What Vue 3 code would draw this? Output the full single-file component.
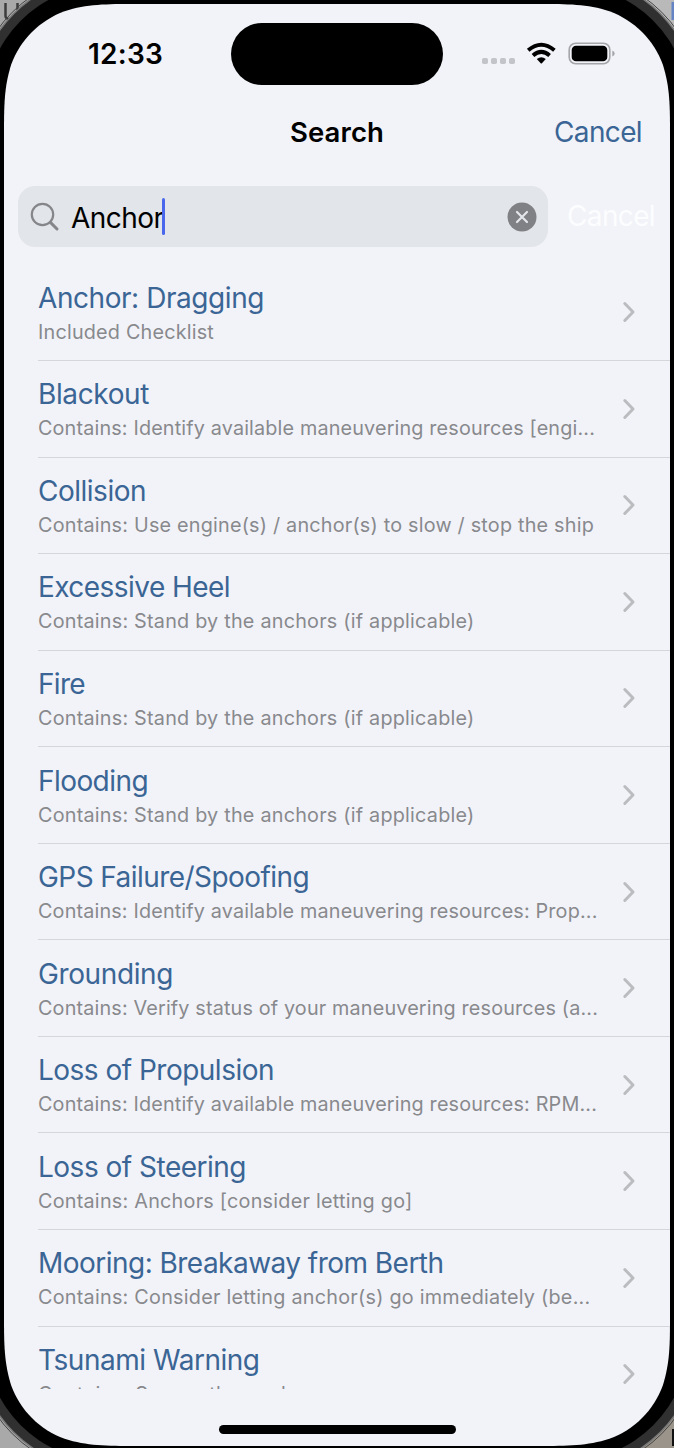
<script setup>
const rows = [
  { title: 'Anchor: Dragging', sub: 'Included Checklist', tw: 226, sw: 176 },
  { title: 'Blackout', sub: 'Contains: Identify available maneuvering resources [engi...', tw: 111, sw: 557 },
  { title: 'Collision', sub: 'Contains: Use engine(s) / anchor(s) to slow / stop the ship', tw: 108, sw: 556 },
  { title: 'Excessive Heel', sub: 'Contains: Stand by the anchors (if applicable)', tw: 192, sw: 436.5 },
  { title: 'Fire', sub: 'Contains: Stand by the anchors (if applicable)', tw: 47, sw: 436.5 },
  { title: 'Flooding', sub: 'Contains: Stand by the anchors (if applicable)', tw: 110, sw: 436.5 },
  { title: 'GPS Failure/Spoofing', sub: 'Contains: Identify available maneuvering resources: Prop...', tw: 271, sw: 559.5 },
  { title: 'Grounding', sub: 'Contains: Verify status of your maneuvering resources (a...', tw: 135, sw: 560 },
  { title: 'Loss of Propulsion', sub: 'Contains: Identify available maneuvering resources: RPM...', tw: 236, sw: 559 },
  { title: 'Loss of Steering', sub: 'Contains: Anchors [consider letting go]', tw: 208, sw: 374.5 },
  { title: 'Mooring: Breakaway from Berth', sub: 'Contains: Consider letting anchor(s) go immediately (be...', tw: 405.5, sw: 552.5 },
  { title: 'Tsunami Warning', sub: 'Contains: Secure the anchor', tw: 221.5, sw: 275 },
]

// Spread the leftover line width evenly between the letters.
const vFit = {
  mounted(el, { value }) {
    const w = el.getBoundingClientRect().width
    el.style.letterSpacing = `${(value - w) / el.textContent.length}px`
  },
}
</script>

<template>
  <div class="desktop">
    <svg class="device" width="674" height="1448" viewBox="0 0 674 1448">
      <rect width="674" height="1448" fill="#a9a9a9" />
      <path d="M5.5 3V16Q5.5 19 10 19" fill="none" stroke="#3c3c3c" stroke-width="2.5" />
      <path d="M17.5 3V10" stroke="#3c3c3c" stroke-width="2.5" />
      <rect x="634" width="40" height="60" fill="#b9b9b9" />
      <rect x="671.5" y="2" width="3" height="18" fill="#6484c4" />
      <rect x="634" y="1400" width="40" height="48" fill="#9b948a" />
      <path d="M673 1429V1446" stroke="#111" stroke-width="2" />
      <rect x="-25" y="-25" width="724" height="1496" rx="132" fill="#303030" stroke="#777" stroke-width="1.5" />
      <rect x="-27" y="-27" width="728" height="1500" rx="134" fill="none" stroke="#444" stroke-width="1" />
      <rect x="-15" y="-15" width="704" height="1476" rx="122" fill="#000" />
      <path
        fill="#f2f3f8"
        d="M136 4H538C568 4 587 4 609.4 11.2C634.2 20.2 653.8 39.8 662.8 64.6C670 87.4 670 106 670 136V1314C670 1344 670 1362.6 662.8 1385.4C653.8 1410.2 634.2 1429.8 609.4 1438.8C587 1446 568 1446 538 1446H136C106 1446 87 1446 64.6 1438.8C39.8 1429.8 20.2 1410.2 11.2 1385.4C4 1362.6 4 1344 4 1314V136C4 106 4 87.4 11.2 64.6C20.2 39.8 39.8 20.2 64.6 11.2C87 4 106 4 136 4Z"
      />
    </svg>

    <div class="screen">
      <header class="status">
        <span v-fit="75" class="time">12:33</span>
        <div class="island"></div>
        <svg class="indicators" width="136" height="26" viewBox="0 0 136 26">
          <g fill="#c3c4c9">
            <rect x="2" y="17" width="6" height="6" rx="1.7" />
            <rect x="11" y="17" width="6" height="6" rx="1.7" />
            <rect x="20" y="17" width="6" height="6" rx="1.7" />
            <rect x="29" y="17" width="6" height="6" rx="1.7" />
          </g>
          <g fill="none" stroke="#000" stroke-width="4">
            <path d="M48.2 9.3Q61.3 -1.7 74.4 9.3" />
            <path d="M53 14.4Q61.3 7.2 69.6 14.4" />
          </g>
          <path d="M56.8 18.1Q61.3 14.5 65.8 18.1L61.9 22.3Q61.3 22.9 60.7 22.3Z" />
          <rect x="89.2" y="2.2" width="40.6" height="20.6" rx="6.5" fill="none" stroke="#a4a5a8" stroke-width="1.6" />
          <rect x="91.7" y="4.8" width="35.6" height="15.4" rx="4.3" />
          <path d="M132.3 9.5Q134.7 10.5 134.7 12.500T132.3 15.5Z" fill="#a4a5a8" />
        </svg>
      </header>

      <nav class="navbar">
        <span v-fit="94" class="heading">Search</span>
        <span v-fit="88" class="cancel">Cancel</span>
      </nav>

      <div class="searchbar">
        <div class="field">
          <svg class="glass" width="30" height="30" viewBox="0 0 30 30" fill="none" stroke="#85868a">
            <circle cx="12.5" cy="12.5" r="10.7" stroke-width="2.2" />
            <path d="M20.4 20.4L27 27" stroke-width="3" stroke-linecap="round" />
          </svg>
          <span v-fit="92.5" class="query">Anchor</span>
          <span class="caret"></span>
          <svg class="clear" width="30" height="30" viewBox="0 0 30 30">
            <circle cx="15" cy="15" r="14.5" fill="#808185" />
            <path d="M10 10L20 20M20 10L10 20" stroke="#e3e6ea" stroke-width="2.2" stroke-linecap="round" />
          </svg>
        </div>
        <span v-fit="88" class="ghost">Cancel</span>
      </div>

      <div class="list">
        <div v-for="row in rows" :key="row.title" class="row">
          <div class="copy">
            <div class="title"><span v-fit="row.tw">{{ row.title }}</span></div>
            <div class="sub"><span v-fit="row.sw">{{ row.sub }}</span></div>
          </div>
          <svg class="chevron" width="14" height="22" viewBox="0 0 14 22">
            <path d="M2.8 2.5L11 11L2.8 19.5" fill="none" stroke="#bbbcc0" stroke-width="3" stroke-linecap="round" stroke-linejoin="round" />
          </svg>
        </div>
      </div>

      <div class="home"></div>
    </div>
  </div>
</template>

<style>
body { margin: 0; overflow: hidden; }
</style>

<style scoped>
.desktop {
  position: relative;
  width: 674px;
  height: 1448px;
  overflow: hidden;
  font-family: Inter, "Liberation Sans", sans-serif;
  white-space: nowrap;
}
.device { position: absolute; inset: 0; }
.screen {
  position: relative;
  box-sizing: border-box;
  width: 674px;
  height: 1448px;
  padding: 4px 4px 2px;
  display: flex;
  flex-direction: column;
}
.status {
  height: 100px;
  flex: none;
  display: grid;
  grid-template-columns: 227px 212px 227px;
  align-items: center;
}
.time { justify-self: start; margin-left: 84px; font-size: 28px; font-weight: 570; }
.island { height: 62px; border-radius: 31px; background: #000; }
.indicators { margin-left: 37px; }
.navbar {
  height: 57px;
  flex: none;
  display: grid;
  grid-template-columns: 1fr auto 1fr;
  align-items: center;
}
.heading { grid-column: 2; padding-bottom: 2px; font-size: 27.5px; font-weight: 590; }
.cancel { justify-self: end; margin-right: 28px; padding-bottom: 1px; color: #3a6595; font-size: 28px; }
.searchbar {
  margin-top: 25px;
  height: 61px;
  flex: none;
  display: flex;
  align-items: center;
}
.field {
  box-sizing: border-box;
  width: 530px;
  height: 61px;
  margin-left: 14px;
  padding: 0 11px 0 12px;
  border-radius: 17px;
  background: #e2e5e9;
  display: flex;
  align-items: center;
}
.glass { margin-right: 11px; }
.query { padding-top: 2px; font-size: 28px; }
.caret { width: 3px; height: 37px; border-radius: 1.5px; background: #4968ec; margin-left: -2px; }
.clear { margin-left: auto; }
.ghost { margin-left: 19px; padding-bottom: 2px; color: #fcfdfe; font-size: 28px; }
.list {
  box-sizing: border-box;
  margin-top: 17px;
  padding-top: 0.5px;
  height: 1125px;
  flex: none;
  overflow: hidden;
}
.row {
  box-sizing: border-box;
  height: 96.55px;
  margin-left: 34px;
  padding-right: 34px;
  border-bottom: 1px solid #d5d6da;
  display: flex;
  align-items: center;
  justify-content: space-between;
}
.copy { padding-top: 2px; }
.title { height: 37px; line-height: 37px; color: #3a6595; font-size: 28px; }
.sub { height: 30px; line-height: 30px; color: #88898d; font-size: 19.8px; }
.chevron { flex: none; }
.home { width: 237px; height: 9px; border-radius: 5px; background: #000; margin: 36px auto 0; }
</style>
